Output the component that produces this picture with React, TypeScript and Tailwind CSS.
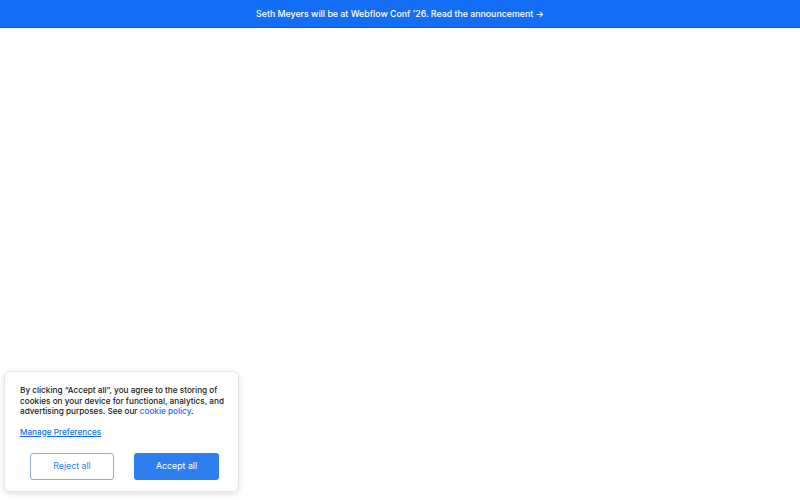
export default function App() {
  return (
    <div className="relative h-[500px] w-[800px] overflow-hidden bg-white font-['Inter',sans-serif]">
      {/* Announcement bar */}
      <a
        href="#"
        className="flex h-[28px] items-center justify-center border-b border-[#0f5bd0] bg-[#146ef5] text-[8.8px] font-medium text-white"
      >
        Seth Meyers will be at Webflow Conf ’26. Read the announcement →
      </a>

      {/* Cookie consent */}
      <div className="absolute left-[4px] top-[371px] w-[235px] rounded-[6px] border border-[#e6e6e6] bg-white pb-[11px] pl-[15px] pr-[12px] pt-[13px] shadow-[0_2px_6px_rgba(0,0,0,0.12)]">
        <p className="text-[8.2px] font-medium leading-[10.5px] text-[#1a1a1a]">
          By clicking “Accept all”, you agree to the storing of cookies on your
          device for functional, analytics, and advertising purposes. See our{" "}
          <a href="#" className="text-[#146ef5]">
            cookie policy
          </a>
          .
        </p>
        <a
          href="#"
          className="mt-[9px] inline-block text-[8.2px] font-medium leading-[10.5px] text-[#146ef5] underline"
        >
          Manage Preferences
        </a>
        <div className="mt-[12px] flex justify-center gap-[20px] pl-[3px]">
          <button
            type="button"
            className="h-[27px] w-[84px] rounded-[3px] border border-[#8fb0cc] bg-white text-[8.8px] text-[#2d7ff0]"
          >
            Reject all
          </button>
          <button
            type="button"
            className="h-[27px] w-[85px] rounded-[3px] bg-[#2d7ff0] text-[8.8px] text-white"
          >
            Accept all
          </button>
        </div>
      </div>
    </div>
  );
}
